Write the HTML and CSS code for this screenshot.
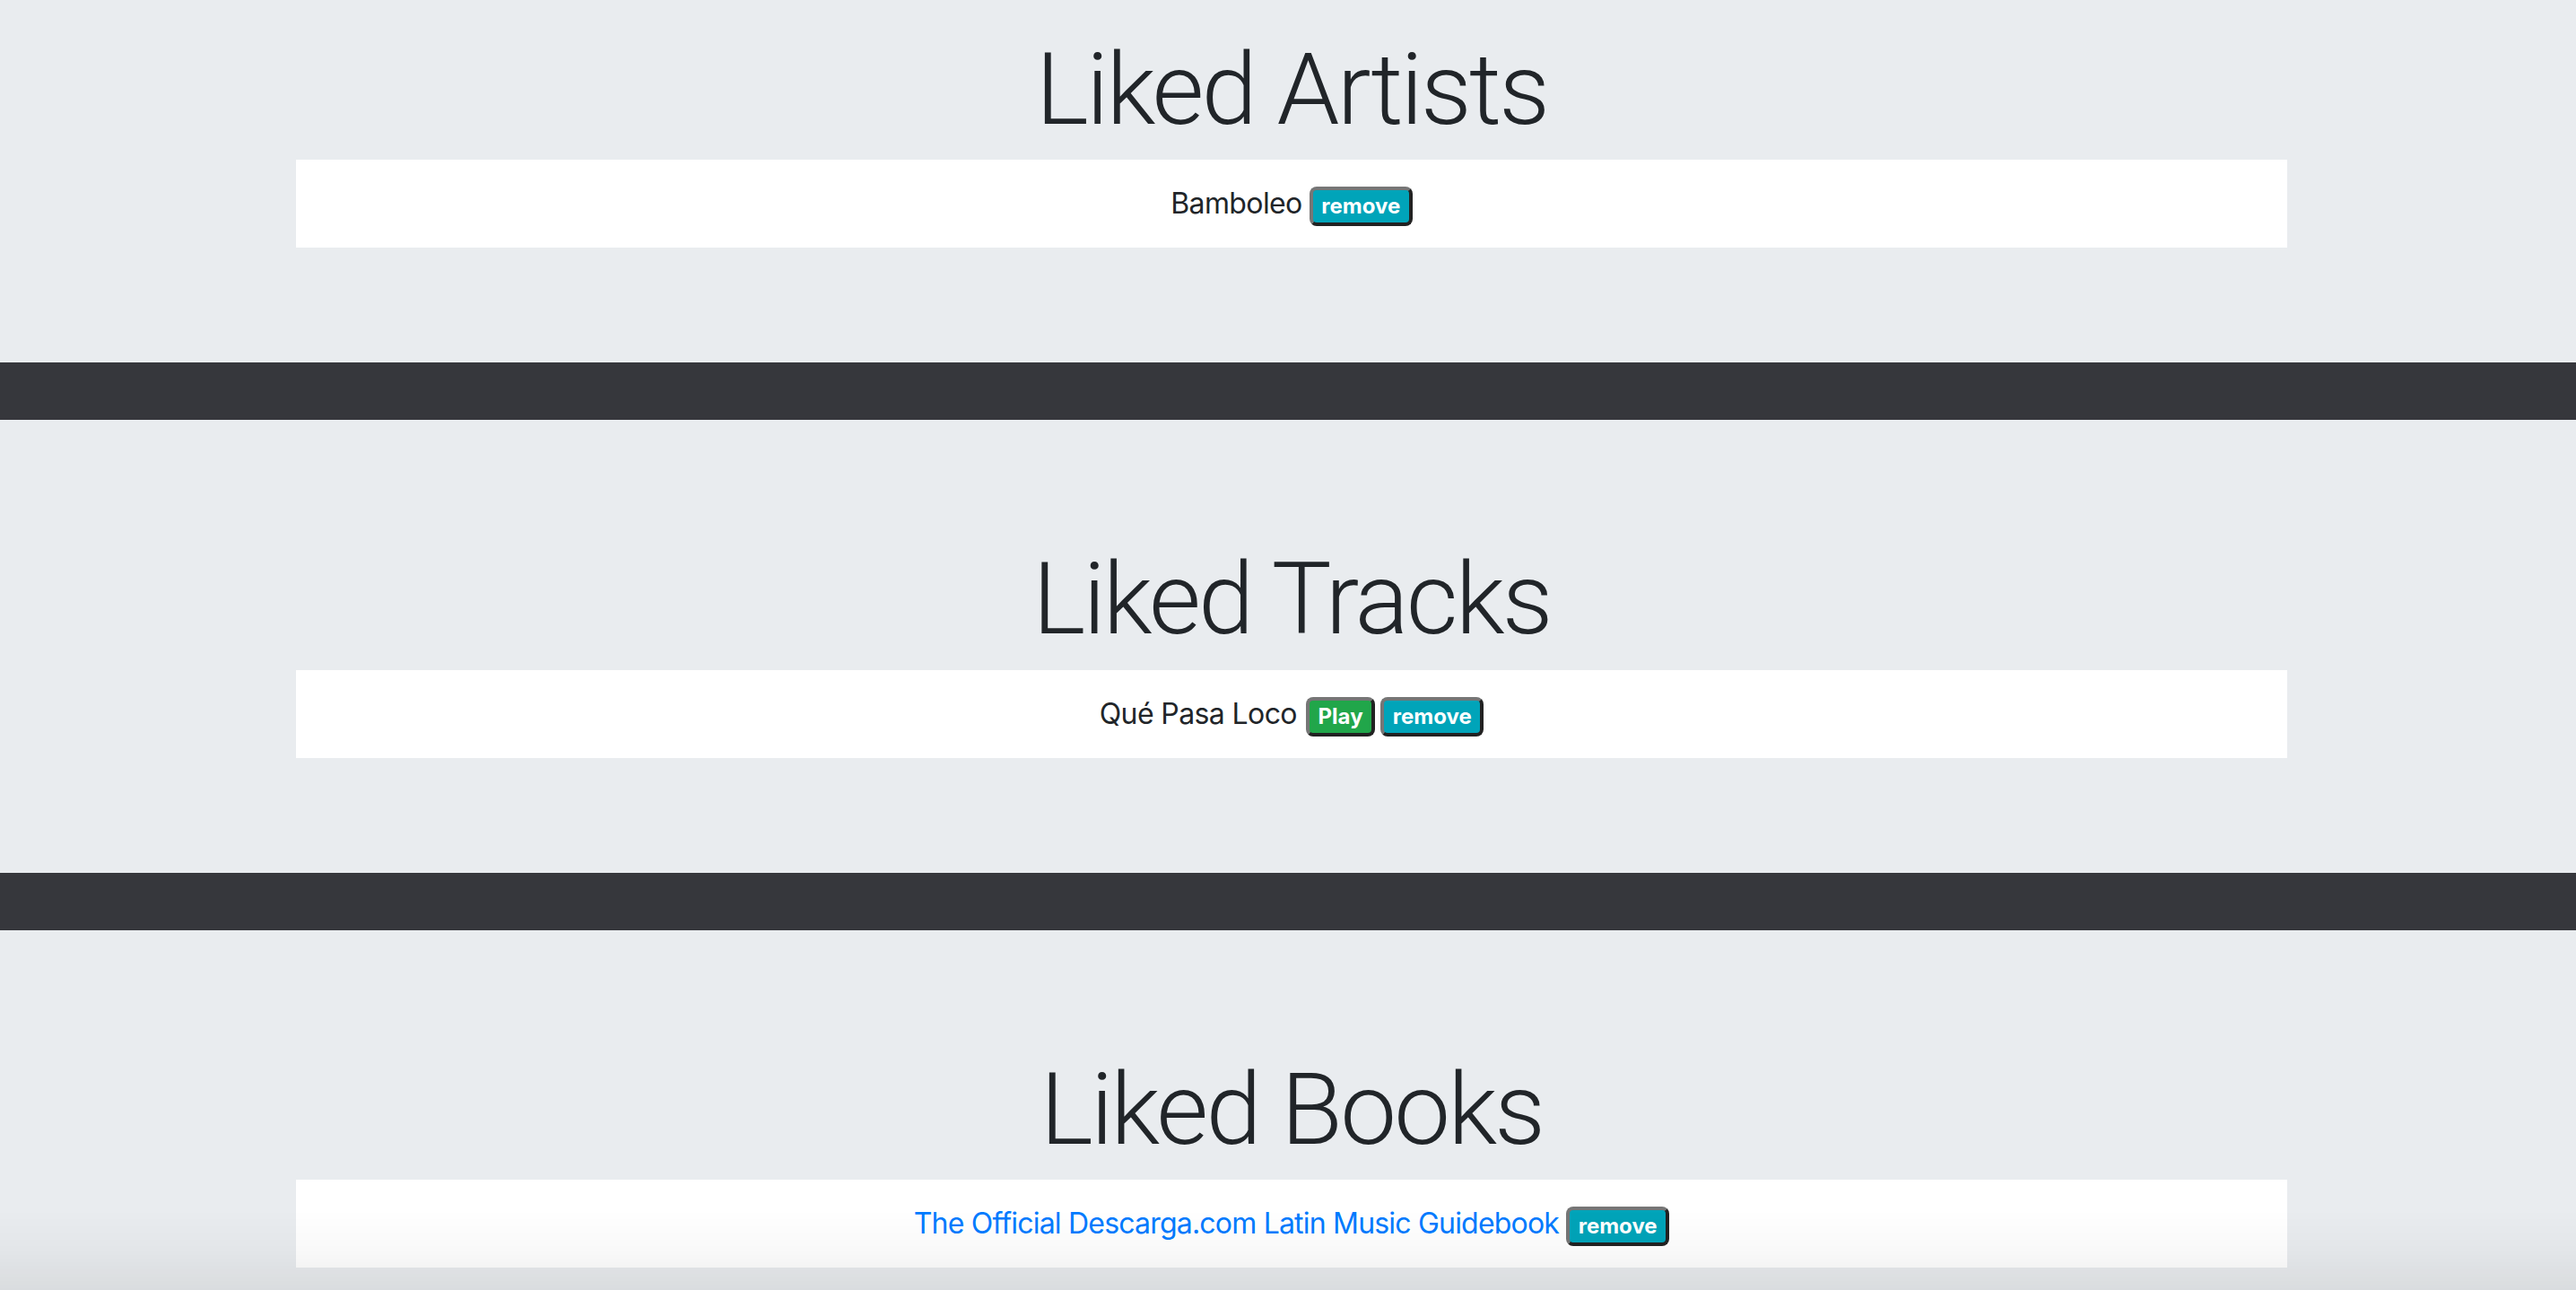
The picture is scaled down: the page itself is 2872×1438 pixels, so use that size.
FILE: index.html
```html
<!DOCTYPE html>
<html lang="en">
<head>
<meta charset="utf-8">
<title>Liked</title>
<link rel="stylesheet" href="styles.css">
</head>
<body>
<section class="jumbo jumbo-first">
  <div class="container">
    <h1 class="display">Liked Artists</h1>
    <ul class="list">
      <li class="list-item"><span class="name">Bamboleo</span><button class="badge badge-info gap-a">remove</button></li>
    </ul>
  </div>
</section>
<section class="jumbo">
  <div class="container">
    <h1 class="display">Liked Tracks</h1>
    <ul class="list">
      <li class="list-item"><span class="name">Qué Pasa Loco</span><button class="badge badge-success gap-b">Play</button><button class="badge badge-info gap-c">remove</button></li>
    </ul>
  </div>
</section>
<section class="jumbo jumbo-last">
  <div class="container">
    <h1 class="display">Liked Books</h1>
    <ul class="list">
      <li class="list-item"><a class="link" href="#">The Official Descarga.com Latin Music Guidebook</a><button class="badge badge-info gap-d">remove</button></li>
    </ul>
  </div>
</section>
<div class="vignette"></div>
</body>
</html>
```
FILE: styles.css
```css
html, body {
  margin: 0;
  padding: 0;
}
body {
  background: #36373c;
  font-family: Inter, "Helvetica Neue", "Liberation Sans", Arial, sans-serif;
  color: #212529;
  overflow: hidden;
  height: 1438px;
}
.jumbo {
  background: #e9ecef;
  padding: 128px 0;
  margin-bottom: 64px;
}
.jumbo-first {
  padding-top: 28px;
}
.jumbo-last {
  margin-bottom: 0;
}
.container {
  width: 2220px;
  margin: 0 0 0 330px;
}
.display {
  font-family: Roboto, Inter, "Liberation Sans", Arial, sans-serif;
  font-size: 112px;
  font-weight: 300;
  line-height: 134.4px;
  padding-top: 5px;
  margin: 0 0 11px;
  text-align: center;
  color: #212529;
  letter-spacing: -2.8px;
}
.list {
  list-style: none;
  margin: 0;
  padding: 0;
}
.list-item {
  background: #fff;
  height: 98px;
  box-sizing: border-box;
  padding: 25px 40px;
  text-align: center;
  font-size: 32px;
  line-height: 48px;
  font-weight: 400;
  white-space: nowrap;
}
.name {
  color: #212529;
  letter-spacing: -0.6px;
}
.link {
  color: #007bff;
  text-decoration: none;
  letter-spacing: -0.8px;
}
.badge {
  display: inline-block;
  font-family: Inter, "Helvetica Neue", "Liberation Sans", Arial, sans-serif;
  font-size: 24px;
  font-weight: 700;
  line-height: 1;
  padding: 6px 9.6px;
  border-radius: 8px;
  border-width: 4px;
  border-style: solid;
  border-color: #767676 #222 #222 #767676;
  color: #fff;
  vertical-align: baseline;
  margin: 0;
  letter-spacing: 0;
}
.badge-info {
  background: #00a4b9;
}
.badge-success {
  background: #21a64a;
}
.gap-a { margin-left: 8px; }
.gap-b { margin-left: 10px; }
.gap-c { margin-left: 6px; }
.gap-d { margin-left: 8px; }
.vignette {
  position: fixed;
  left: 0;
  right: 0;
  bottom: 0;
  height: 90px;
  pointer-events: none;
  background: linear-gradient(to bottom, rgba(0,0,0,0) 0%, rgba(0,0,0,0.025) 50%, rgba(0,0,0,0.065) 100%);
}
```
